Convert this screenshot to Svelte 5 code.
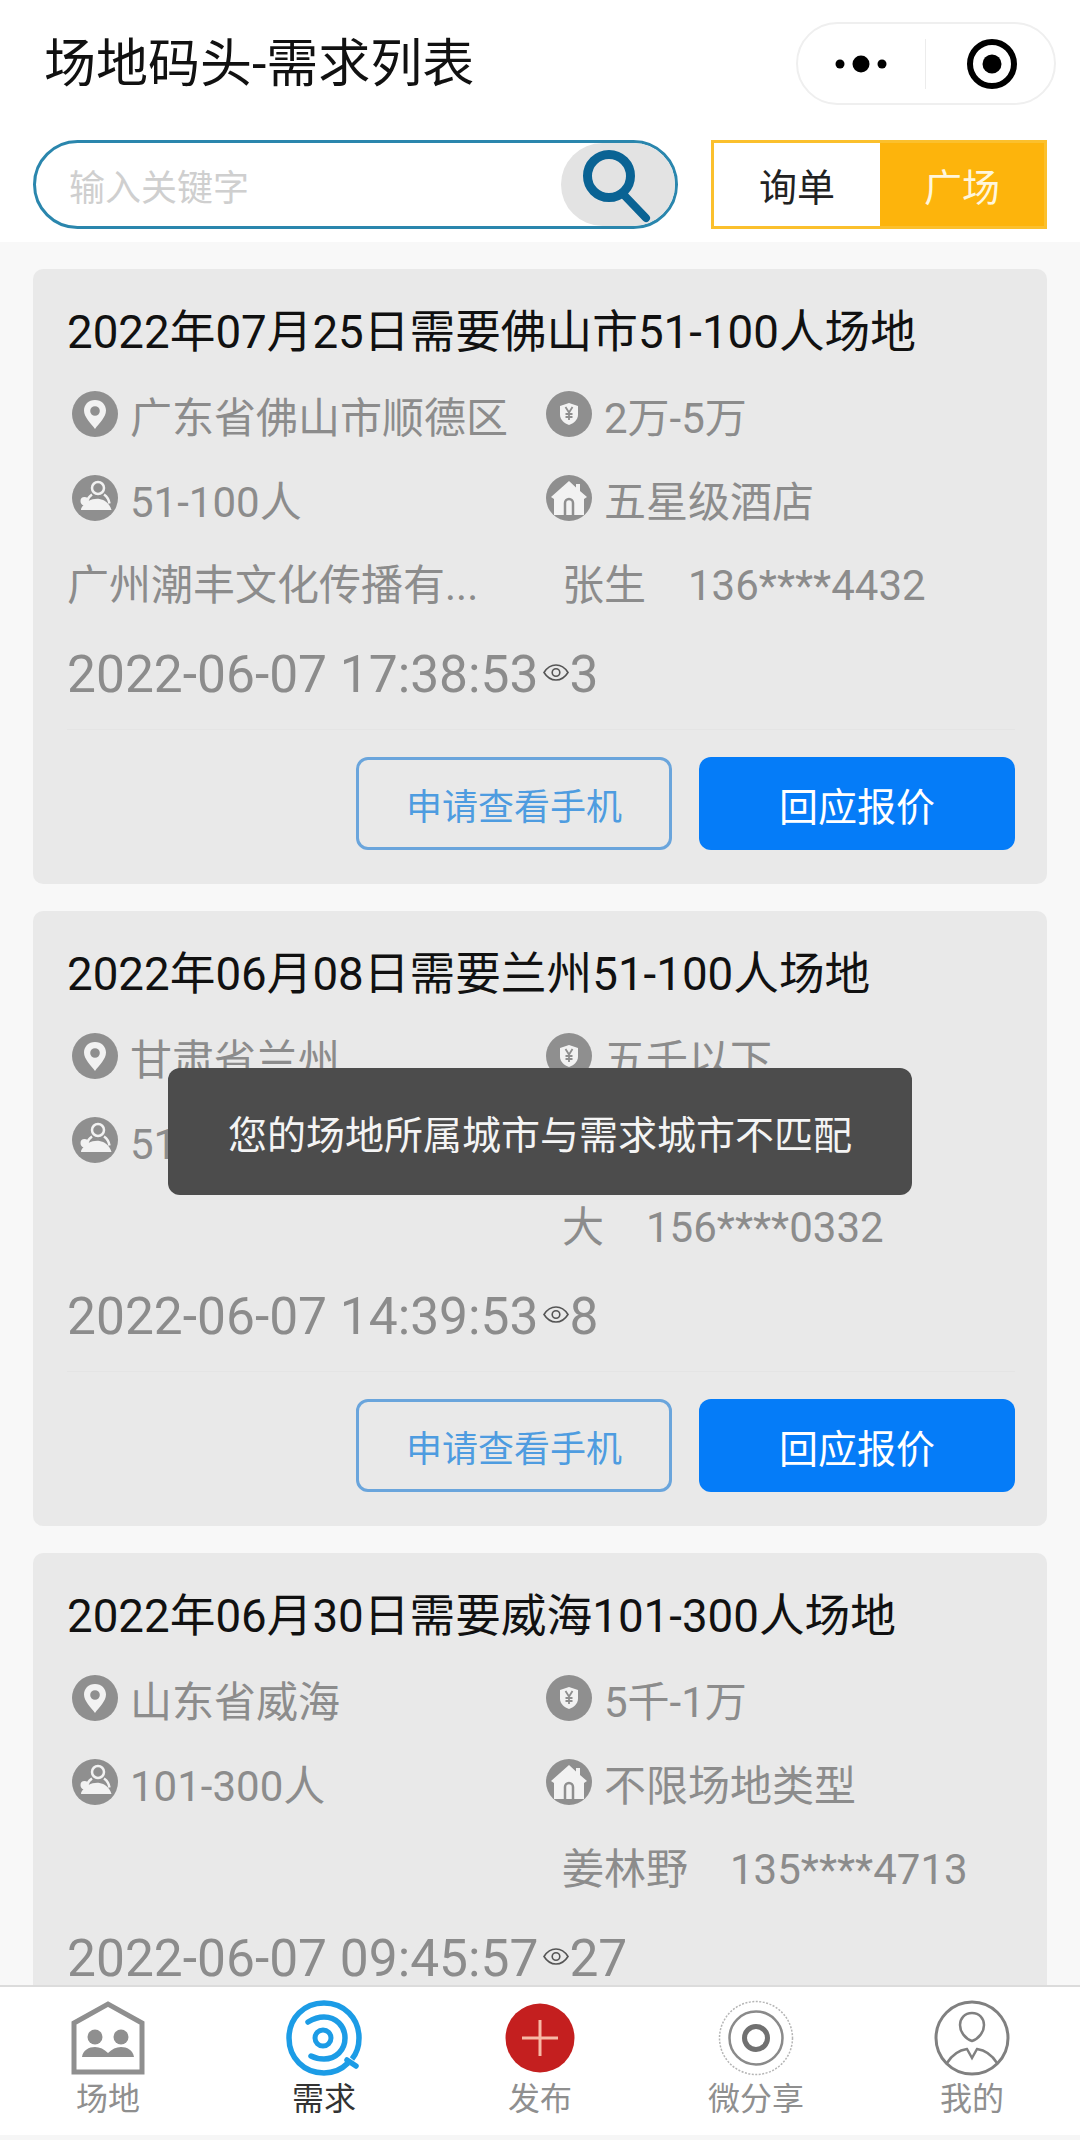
<script>
  const cards = [
    { title: '2022年07月25日需要佛山市51-100人场地', area: '广东省佛山市顺德区', budget: '2万-5万', people: '51-100人', kind: '五星级酒店', company: '广州潮丰文化传播有...', name: '张生', phone: '136****4432', time: '2022-06-07 17:38:53', views: 3 },
    { title: '2022年06月08日需要兰州51-100人场地', area: '甘肃省兰州', budget: '五千以下', people: '51-100人', kind: '不限场地类型', company: '', name: '大', phone: '156****0332', time: '2022-06-07 14:39:53', views: 8 },
    { title: '2022年06月30日需要威海101-300人场地', area: '山东省威海', budget: '5千-1万', people: '101-300人', kind: '不限场地类型', company: '', name: '姜林野', phone: '135****4713', time: '2022-06-07 09:45:57', views: 27 }
  ];
  const tabs = ['场地', '需求', '发布', '微分享', '我的'];
</script>

<div class="page">
  <header class="nav">
    <h1>场地码头-需求列表</h1>
    <div class="capsule">
      <svg class="dots" viewBox="0 0 52 20" aria-hidden="true"><circle cx="5" cy="10" r="4.5"/><circle cx="26" cy="10" r="8.500"/><circle cx="47" cy="10" r="4.500"/></svg>
      <span class="sep"></span>
      <svg class="target" viewBox="0 0 52 52" aria-hidden="true"><circle cx="26" cy="26" r="22" fill="none" stroke="#000" stroke-width="6"/><circle cx="26" cy="26" r="9.500"/></svg>
    </div>
  </header>

  <div class="search-row">
    <div class="search">
      <span class="placeholder">输入关键字</span>
      <div class="search-btn">
        <svg viewBox="0 0 76 76" aria-hidden="true"><circle cx="29" cy="29" r="21.500" fill="none" stroke="#0a6394" stroke-width="9"/><path d="M43 47 L66 71" stroke="#0a6394" stroke-width="8" stroke-linecap="round"/></svg>
      </div>
    </div>
    <div class="toggle">
      <span class="opt">询单</span>
      <span class="opt on">广场</span>
    </div>
  </div>

  <main class="list">
    {#each cards as c}
      <article class="card">
        <h2>{c.title}</h2>
        <div class="grid">
          <div class="cell">
            <svg class="ic" viewBox="0 0 46 46" aria-hidden="true"><circle cx="23" cy="23" r="23" fill="#8f8f8f"/><path fill-rule="evenodd" fill="#f2f2f2" d="M23 9c-6.600 0-11 4.800-11 10.600 0 6.600 7 13 11 18.400 4-5.400 11-11.800 11-18.400C34 13.800 29.600 9 23 9zm0 6.200a4.800 4.800 0 1 1 0 9.600 4.800 4.800 0 0 1 0-9.600z"/></svg>
            <span>{c.area}</span>
          </div>
          <div class="cell">
            <svg class="ic" viewBox="0 0 46 46" aria-hidden="true"><circle cx="23" cy="23" r="23" fill="#8f8f8f"/><path fill="#f2f2f2" d="M23 12l9 3v8.500c0 5.500-4.500 9-9 10.500-4.500-1.500-9-5-9-10.500V15z"/><path fill="none" stroke="#8f8f8f" stroke-width="1.800" d="M19.500 16L23 21.500l3.500-5.500M23 21.500V29M19.500 23h7M19.500 26h7"/></svg>
            <span>{c.budget}</span>
          </div>
          <div class="cell">
            <svg class="ic" viewBox="0 0 46 46" aria-hidden="true"><circle cx="23" cy="23" r="23" fill="#8f8f8f"/><circle cx="26" cy="13" r="6" fill="none" stroke="#f2f2f2" stroke-width="2.500"/><path fill="none" stroke="#f2f2f2" stroke-width="2.500" d="M20 19.500c-3 2-4.500 4.500-5 7M32 19.500c3 2 5 6 5.500 9"/><path fill="#f2f2f2" d="M9 35c0-2 1-3.500 2.500-4.500-2-1-3-2.500-3-4.500a4 4 0 0 1 8 0c3-1.500 7-2.500 11-2 5 .7 10 4 12 11z"/></svg>
            <span>{c.people}</span>
          </div>
          <div class="cell">
            <svg class="ic" viewBox="0 0 46 46" aria-hidden="true"><circle cx="23" cy="23" r="23" fill="#8f8f8f"/><path fill="#f2f2f2" d="M23 6L5 22l3 2v16h30V24l3-2-7-6V9h-4v3.500z"/><path fill="none" stroke="#8f8f8f" stroke-width="2.500" d="M19 40V28a4 4 0 0 1 8 0v12"/></svg>
            <span>{c.kind}</span>
          </div>
        </div>
        <div class="contact">
          <span class="company">{c.company}</span>
          <span class="name">{c.name}</span>
          <span class="phone">{c.phone}</span>
        </div>
        <div class="meta">
          <span>{c.time}</span>
          <svg class="eye" viewBox="0 0 26 17" aria-hidden="true"><path d="M1 8.500c3-4.800 7-7.500 12-7.500s9 2.700 12 7.500c-3 4.800-7 7.500-12 7.500S4 13.300 1 8.500z" fill="none" stroke="#555" stroke-width="1.600"/><circle cx="13" cy="8.500" r="3.800" fill="none" stroke="#555" stroke-width="1.600"/></svg>
          <span>{c.views}</span>
        </div>
        <div class="actions">
          <button class="ghost">申请查看手机</button>
          <button class="solid">回应报价</button>
        </div>
      </article>
    {/each}
  </main>

  <nav class="tabs">
    {#each tabs as t, i}
      <div class="tab" class:active={i === 1}>
        {#if i === 0}
          <svg viewBox="0 0 76 76" aria-hidden="true"><path d="M4 72V23L38 4l34 19v49z" fill="none" stroke="#8f8f8f" stroke-width="5"/><circle cx="25" cy="37" r="7.500" fill="#8f8f8f"/><circle cx="51" cy="37" r="7.500" fill="#8f8f8f"/><path d="M12 57c1-7 7-10 13-10 5 0 9 2 13 6 4-4 8-6 13-6 6 0 12 3 13 10z" fill="#8f8f8f"/></svg>
        {:else if i === 1}
          <svg viewBox="0 0 76 76" aria-hidden="true"><path d="M62 63C55 70 47 73 38 73 18 73 3 58 3 38S18 3 38 3s35 15 35 35c0 8-2 15-7 21" fill="none" stroke="#1c9ce6" stroke-width="5.500"/><path d="M61 60l9 6" stroke="#1c9ce6" stroke-width="5.500" stroke-linecap="round"/><path d="M22 22c5-3 10-5 16-5 12 0 21 9 21 21s-9 21-21 21c-5 0-9-1-13-3" fill="none" stroke="#1c9ce6" stroke-width="5.500" stroke-linecap="round"/><circle cx="37" cy="38" r="8" fill="none" stroke="#1c9ce6" stroke-width="5"/></svg>
        {:else if i === 2}
          <svg viewBox="0 0 76 76" aria-hidden="true"><circle cx="38" cy="38" r="34.500" fill="#c41f1f"/><path d="M20 38h36M38 20v36" stroke="#f7b9a6" stroke-width="3"/></svg>
        {:else if i === 3}
          <svg viewBox="0 0 76 76" aria-hidden="true"><circle cx="38" cy="38" r="36.500" fill="none" stroke="#b5b5b5" stroke-width="1.500" stroke-dasharray="2 1.500"/><circle cx="38" cy="38" r="26.500" fill="none" stroke="#8a8a8a" stroke-width="2.500"/><circle cx="38" cy="38" r="11.500" fill="none" stroke="#707070" stroke-width="5"/></svg>
        {:else}
          <svg viewBox="0 0 76 76" aria-hidden="true"><circle cx="38" cy="38" r="36" fill="none" stroke="#808080" stroke-width="3"/><path d="M38 13c-7.500 0-12 5.500-12 12 0 7 5.500 14 12 16 6.500-2 12-9 12-16 0-6.500-4.500-12-12-12z" fill="none" stroke="#808080" stroke-width="2.500"/><path d="M13 63c5-8 13-13 20-14l5 9 5-9c7 1 15 6 20 14" fill="none" stroke="#808080" stroke-width="2.500"/></svg>
        {/if}
        <span>{t}</span>
      </div>
    {/each}
  </nav>
  <div class="strip"></div>

  <div class="toast">您的场地所属城市与需求城市不匹配</div>
</div>

<style>
  :global(body) { margin: 0; background: #fff; }
  .page {
    position: relative; width: 1080px; height: 2140px; overflow: hidden;
    display: flex; flex-direction: column; background: #f8f8f8;
    font-family: Roboto, "Noto Sans CJK SC", sans-serif;
  }
  .nav {
    height: 140px; flex: none; box-sizing: border-box; padding: 22px 24px 0 44px;
    display: flex; justify-content: space-between; align-items: flex-start; background: #fff;
  }
  h1 { margin: 0; height: 85px; line-height: 85px; font-size: 52px; font-weight: 400; color: #111; }
  .capsule {
    width: 260px; height: 83px; box-sizing: border-box; border: 2px solid #efefef; border-radius: 42px;
    display: flex; align-items: center; padding-left: 37px;
  }
  .dots { width: 52px; height: 20px; flex: none; }
  .sep { width: 1px; height: 50px; background: #ececec; margin: 0 40px 0 38px; flex: none; }
  .target { width: 52px; height: 52px; flex: none; }

  .search-row {
    height: 102px; flex: none; box-sizing: border-box; padding: 0 33px 13px;
    display: flex; justify-content: space-between; background: #fff;
  }
  .search {
    width: 645px; height: 89px; box-sizing: border-box; border: 3px solid #2a86ad; border-radius: 45px;
    display: flex; align-items: center; justify-content: space-between; overflow: hidden; background: #fff;
  }
  .placeholder { margin-left: 33px; font-size: 36px; color: #cfcfcf; }
  .search-btn {
    width: 114px; height: 100%; border-radius: 45px 0 0 45px; background: #e3e3e3;
    display: flex; align-items: center; justify-content: center;
  }
  .search-btn svg { width: 76px; height: 76px; }
  .toggle { width: 336px; height: 89px; box-sizing: border-box; border: 3px solid #fbc02d; display: flex; }
  .opt { display: flex; align-items: center; justify-content: center; font-size: 38px; color: #222; width: 166px; }
  .opt.on { flex: 1; background: #fdb40c; color: #fff6dc; }

  .list { flex: 1; min-height: 0; overflow: hidden; padding: 27px 33px 0; display: flex; flex-direction: column; gap: 27px; }
  .card { flex: none; height: 615px; box-sizing: border-box; background: #e9e9e9; border-radius: 10px; padding: 32px 34px 0; }
  h2 { margin: 0; height: 64px; line-height: 64px; font-size: 45.700px; font-weight: 400; color: #111; white-space: nowrap; }
  .grid { display: grid; grid-template-columns: 474px 1fr; grid-auto-rows: 84px; margin-top: 7px; }
  .cell { display: flex; align-items: center; gap: 12px; padding-left: 5px; font-size: 42px; color: #8c8c8c; white-space: nowrap; }
  .ic { width: 46px; height: 46px; flex: none; }
  .contact { display: flex; height: 87px; box-sizing: border-box; padding-top: 4px; line-height: 83px; align-items: baseline; font-size: 42px; color: #8c8c8c; white-space: nowrap; }
  .company { width: 495px; flex: none; }
  .name { margin-right: 42px; }
  .meta { display: flex; height: 94px; align-items: center; font-size: 51.500px; color: #8c8c8c; }
  .eye { width: 26px; height: 17px; margin: 0 0 4px 5px; flex: none; }
  .actions {
    border-top: 1px solid #e4e4e4; margin-top: 8px; height: 120px; box-sizing: border-box; padding: 27px 0 0;
    display: flex; justify-content: flex-end; gap: 27px; margin-right: -2px;
  }
  button { width: 316px; height: 93px; border-radius: 12px; font: inherit; box-sizing: border-box; padding: 0; }
  .ghost { background: transparent; border: 3px solid #6aa5dc; color: #4e9ce0; font-size: 36px; }
  .solid { background: #057cf8; border: none; color: #fff; font-size: 39px; }

  .tabs {
    flex: none; height: 150px; box-sizing: border-box; border-top: 2px solid #dcdcdc; background: #fff;
    display: grid; grid-template-columns: repeat(5, 1fr);
  }
  .tab { display: flex; flex-direction: column; align-items: center; padding-top: 13px; font-size: 32px; color: #8f8f8f; }
  .tab svg { width: 76px; height: 76px; flex: none; }
  .tab span { margin-top: 3px; line-height: 40px; }
  .tab.active { color: #333; }
  .strip { flex: none; height: 5px; background: #f6f6f6; }

  .toast {
    position: absolute; left: 168px; top: 1068px; width: 744px; height: 127px; border-radius: 12px;
    background: #4c4c4c; color: #f4f4f4; font-size: 39px;
    display: flex; align-items: center; justify-content: center;
  }
</style>
